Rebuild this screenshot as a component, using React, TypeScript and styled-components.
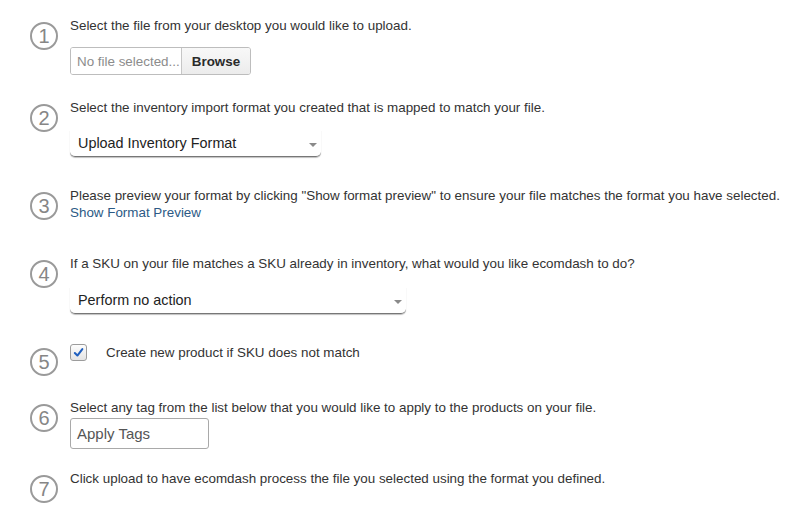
import React from 'react';
import styled, { createGlobalStyle } from 'styled-components';

const GlobalStyle = createGlobalStyle`
  html, body {
    margin: 0;
    padding: 0;
    background: #ffffff;
  }
  body {
    font-family: "Liberation Sans", Arial, sans-serif;
    font-size: 13.4px;
    color: #333333;
  }
`;

const Page = styled.div`
  padding: 17px 0 0 30px;
  width: 768px;
`;

const Step = styled.div<{ $gap: number }>`
  display: flex;
  align-items: flex-start;
  gap: 12px;
  margin-bottom: ${(p) => p.$gap}px;
`;

const Badge = styled.div`
  flex: none;
  width: 24px;
  height: 24px;
  margin-top: 5px;
  border: 2px solid #9a9a9a;
  border-radius: 50%;
  display: flex;
  align-items: center;
  justify-content: center;
  font-size: 20px;
  font-weight: 300;
  color: #868686;
  line-height: 1;
`;

const Body = styled.div`
  display: flex;
  flex-direction: column;
  align-items: flex-start;
`;

const Text = styled.div`
  line-height: 18px;
  white-space: nowrap;
`;

const Link = styled.a`
  line-height: 16px;
  color: #2c5a85;
  text-decoration: none;
  cursor: pointer;
`;

const FileGroup = styled.div`
  display: flex;
  margin-top: 12px;
  height: 28px;
  border: 1px solid #bdbdbd;
  border-radius: 3px;
  overflow: hidden;
  box-sizing: border-box;
`;

const FileName = styled.div`
  width: 104px;
  padding-left: 6px;
  display: flex;
  align-items: center;
  color: #8c8c8c;
  background: #fff;
`;

const BrowseButton = styled.button`
  width: 69px;
  border: none;
  border-left: 1px solid #c6c6c6;
  background: linear-gradient(#f8f8f8, #ececec);
  font-family: inherit;
  font-size: 13.4px;
  font-weight: 700;
  color: #2a2a2a;
  padding: 0;
`;

const Select = styled.div<{ $width: number; $top: number }>`
  position: relative;
  width: ${(p) => p.$width}px;
  height: 27px;
  margin-top: ${(p) => p.$top}px;
  padding-left: 8px;
  box-sizing: border-box;
  display: flex;
  align-items: center;
  font-size: 14.4px;
  color: #222;
  border-bottom: 1px solid #777;
  border-radius: 0 0 5px 5px;
  box-shadow: 0 1px 1px rgba(0, 0, 0, 0.25);
`;

const Caret = styled.span`
  position: absolute;
  right: 4px;
  top: 13px;
  width: 0;
  height: 0;
  border-left: 4px solid transparent;
  border-right: 4px solid transparent;
  border-top: 4px solid #8a8a8a;
`;

const CheckRow = styled.label`
  display: flex;
  align-items: flex-start;
  gap: 19px;
  line-height: 18px;
`;

const Checkbox = styled.span`
  width: 15px;
  height: 15px;
  margin-top: 1px;
  border: 1px solid #9c9c9c;
  border-radius: 3px;
  background: linear-gradient(#fdfdfd, #e4e4e4);
  display: flex;
  align-items: center;
  justify-content: center;
`;

const CheckLabel = styled.span`
  padding-top: 1px;
`;

const TagInput = styled.div`
  margin-top: 1px;
  width: 139px;
  height: 31px;
  box-sizing: border-box;
  border: 1px solid #a9a9a9;
  border-radius: 3px;
  padding-left: 6px;
  display: flex;
  align-items: center;
  font-size: 15px;
  color: #555;
`;

export default function App() {
  return (
    <Page>
      <GlobalStyle />
      <Step $gap={24}>
        <Badge>1</Badge>
        <Body>
          <Text>Select the file from your desktop you would like to upload.</Text>
          <FileGroup>
            <FileName>No file selected...</FileName>
            <BrowseButton>Browse</BrowseButton>
          </FileGroup>
        </Body>
      </Step>
      <Step $gap={30}>
        <Badge>2</Badge>
        <Body>
          <Text>Select the inventory import format you created that is mapped to match your file.</Text>
          <Select $width={251} $top={13}>
            Upload Inventory Format
            <Caret />
          </Select>
        </Body>
      </Step>
      <Step $gap={34}>
        <Badge>3</Badge>
        <Body>
          <Text>
            Please preview your format by clicking "Show format preview" to ensure your file matches the format you have selected.
          </Text>
          <Link>Show Format Preview</Link>
        </Body>
      </Step>
      <Step $gap={29}>
        <Badge>4</Badge>
        <Body>
          <Text>If a SKU on your file matches a SKU already in inventory, what would you like ecomdash to do?</Text>
          <Select $width={336} $top={14}>
            Perform no action
            <Caret />
          </Select>
        </Body>
      </Step>
      <Step $gap={23}>
        <Badge>5</Badge>
        <Body>
          <CheckRow>
            <Checkbox>
              <svg width="11" height="11" viewBox="0 0 12 12">
                <path d="M2 6.5 L4.8 9.3 L10.2 2.2" fill="none" stroke="#1f5fbf" strokeWidth="2.2" strokeLinecap="round" strokeLinejoin="round" />
              </svg>
            </Checkbox>
            <CheckLabel>Create new product if SKU does not match</CheckLabel>
          </CheckRow>
        </Body>
      </Step>
      <Step $gap={21}>
        <Badge>6</Badge>
        <Body>
          <Text>Select any tag from the list below that you would like to apply to the products on your file.</Text>
          <TagInput>Apply Tags</TagInput>
        </Body>
      </Step>
      <Step $gap={0}>
        <Badge>7</Badge>
        <Body>
          <Text>Click upload to have ecomdash process the file you selected using the format you defined.</Text>
        </Body>
      </Step>
    </Page>
  );
}
